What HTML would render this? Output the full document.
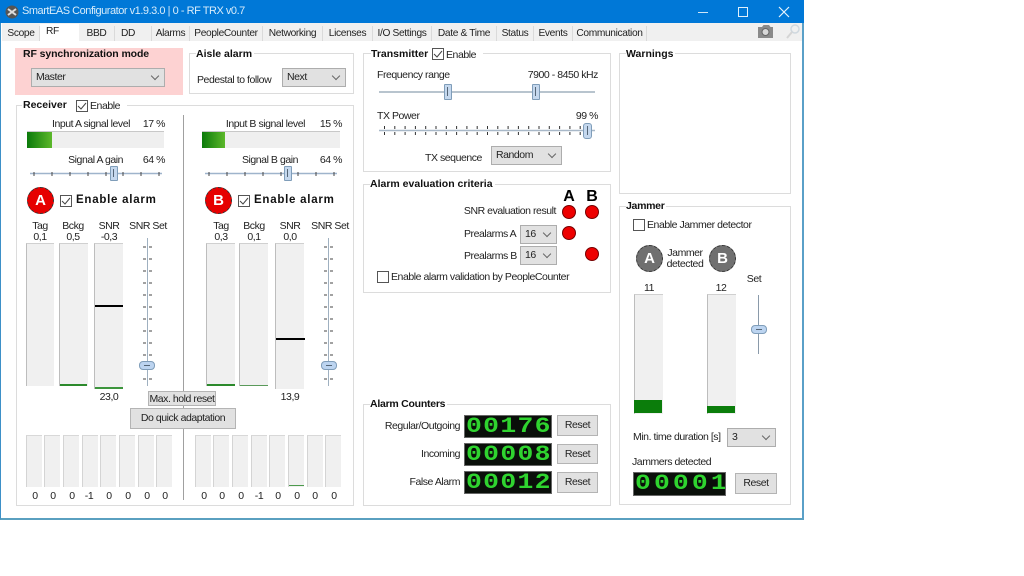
<!DOCTYPE html>
<html><head><meta charset="utf-8"><title>SmartEAS Configurator</title>
<style>
html,body{margin:0;padding:0;background:#fff;width:1024px;height:576px;overflow:hidden}
body{font-family:"Liberation Sans",sans-serif;font-size:10.5px;letter-spacing:-.45px;color:#222;position:relative}
div,span,svg{position:absolute;box-sizing:border-box}
.t{white-space:nowrap;line-height:12px;height:12px}
.c{width:80px;margin-left:-40px;text-align:center}
.r{width:200px;margin-left:-200px;text-align:right}
.b{font-weight:bold;color:#111;background:#fff;padding:0 2px 0 0;letter-spacing:0}
.g{border:1px solid #dcdcdc;background:#fff}
.tab{top:26px;height:15px;background:#f0f0f0;border-right:1px solid #dadada;text-align:center;line-height:15px;font-size:10.2px;letter-spacing:-.35px}
.sel{background:#e1e1e1;border:1px solid #adadad;line-height:16px;padding-left:4px;height:19px}
.sel:after{content:"";position:absolute;right:6px;top:4px;width:5px;height:5px;border-right:1px solid #666;border-bottom:1px solid #666;transform:rotate(45deg)}
.btn{background:#e1e1e1;border:1px solid #b4b4b4;text-align:center;line-height:18px}
.cb{width:12px;height:12px;border:1px solid #555;background:#fff}
.bar{background:#f0f0f0;border-left:1px solid #bdbdbd;border-top:1px solid #d0d0d0}
.m{top:435px;height:52px;border-left-color:#d4d4d4;border-top-color:#d8d8d8}
.v{top:490px}
.led{background:#0a0f0a;border:1px solid #666;overflow:hidden}
.led span{left:1px;top:0;color:#2fd42f;font-family:"Liberation Mono",monospace;font-weight:bold;font-size:22px;line-height:21px;letter-spacing:1.1px;white-space:nowrap;transform:scaleX(1.2);transform-origin:0 0}
.dot{width:14px;height:14px;border-radius:50%;background:#ee0000;border:1px solid #700}
.circ{width:27px;height:27px;border-radius:50%;color:#fff;font-weight:bold;font-size:15px;text-align:center;line-height:25px;border:1px dashed #333;letter-spacing:0}
.hth{width:8px;height:16px;background:#c5d8ee;border:1px solid #7f9db9;border-radius:1px}
.vth{width:16px;height:9px;background:#bcd4f0;border:1px solid #7f9db9;border-radius:4px}
</style></head><body>
<!-- window -->
<div style="left:0;top:0;width:804px;height:520px;background:#fff;border:1px solid #3d90c8;border-right:2px solid #5aa0c8;border-bottom:2px solid #5aa0c0"></div>
<div style="left:0;top:0;width:804px;height:23px;background:#0078d7"></div>
<svg style="left:5px;top:5px" width="14" height="14" viewBox="0 0 14 14"><circle cx="7" cy="7" r="6.5" fill="#555"/><path d="M3 4 L11 10 M11 4 L3 10" stroke="#ddd" stroke-width="2"/></svg>
<div class="t" style="left:22px;top:5px;color:#d8ecfa;font-size:11px;letter-spacing:-.47px">SmartEAS Configurator v1.9.3.0 | 0 - RF TRX v0.7</div>
<svg style="left:695px;top:4px" width="100" height="16" viewBox="0 0 100 16"><path d="M3 8.500H13" stroke="#cfe6f7"/><rect x="43.500" y="3.500" width="9" height="9" fill="none" stroke="#e0f0fb"/><path d="M84 3L94 13M94 3L84 13" stroke="#e8f4fc" stroke-width="1.200"/></svg>
<!-- tabs -->
<div style="left:2px;top:23px;width:800px;height:18px;background:#f0f0f0"></div>
<div class="tab" style="left:3px;width:37px">Scope</div>
<div class="tab" style="left:40px;top:24px;width:39px;height:18px;background:#fff;border:0;line-height:15px;text-align:left;padding-left:6px;">RF</div>
<div class="tab" style="left:79px;width:36px">BBD</div>
<div class="tab" style="left:115px;width:37px;text-align:left;padding-left:6px">DD</div>
<div class="tab" style="left:152px;width:38px">Alarms</div>
<div class="tab" style="left:190px;width:73px">PeopleCounter</div>
<div class="tab" style="left:263px;width:60px">Networking</div>
<div class="tab" style="left:323px;width:50px">Licenses</div>
<div class="tab" style="left:373px;width:59px">I/O Settings</div>
<div class="tab" style="left:432px;width:65px">Date &amp; Time</div>
<div class="tab" style="left:497px;width:37px">Status</div>
<div class="tab" style="left:534px;width:39px">Events</div>
<div class="tab" style="left:573px;width:74px">Communication</div>
<svg style="left:756px;top:23px" width="46" height="17" viewBox="0 0 46 17"><path d="M2 4H6L7.500 2H13L14.500 4H17V15H2Z" fill="#8a8a8a"/><circle cx="9.500" cy="9" r="3.500" fill="#d8d8d8" stroke="#666"/><circle cx="39" cy="6" r="4" fill="none" stroke="#cfd8df" stroke-width="1.500"/><path d="M36 9L31 15" stroke="#d5d5d5" stroke-width="2"/></svg>

<!-- RF sync -->
<div style="left:15px;top:48px;width:168px;height:47px;background:#fdd2d2"></div>
<div class="t" style="left:23px;top:48px;font-weight:bold;color:#111;letter-spacing:-.1px">RF synchronization mode</div>
<div class="sel" style="left:31px;top:68px;width:134px">Master</div>
<!-- Aisle -->
<div class="g" style="left:189px;top:53px;width:165px;height:41px"></div>
<div class="t b" style="left:196px;top:48px">Aisle alarm</div>
<div class="t" style="left:197px;top:74px">Pedestal to follow</div>
<div class="sel" style="left:282px;top:68px;width:64px">Next</div>

<!-- Receiver -->
<div class="g" style="left:16px;top:105px;width:338px;height:401px"></div>
<div class="t b" style="left:22px;top:99px;padding-left:1px;width:105px">Receiver</div>
<div class="cb" style="left:76px;top:100px"></div>
<svg style="left:77px;top:101px" width="10" height="10"><path d="M1 5L4 8L9 2" fill="none" stroke="#444"/></svg>
<div class="t" style="left:90px;top:100px">Enable</div>
<div style="left:183px;top:115px;width:1px;height:385px;background:#a0a0a0"></div>

<div class="t r" style="left:130px;top:118px">Input A signal level</div>
<div class="t r" style="left:165px;top:118px">17 %</div>
<div style="left:27px;top:131px;width:137px;height:17px;background:#efefef;border-top:1px solid #c8c8c8"></div>
<div style="left:27px;top:132px;width:25px;height:16px;background:linear-gradient(90deg,#0b7a0b,#5cb82a)"></div>
<div class="t r" style="left:123px;top:154px">Signal A gain</div>
<div class="t r" style="left:165px;top:154px">64 %</div>
<svg style="left:28px;top:168px" width="136" height="12"><path d="M2 5.500H134" stroke="#9fb4cc" stroke-width="1.500"/><path d="M6 4V8M24 4V8M42 4V8M60 4V8M78 4V8M95 4V8M113 4V8M131 4V8" stroke="#444"/></svg>
<div class="hth" style="left:110px;top:166px;height:15px"></div><div style="left:113px;top:169px;width:1px;height:8px;background:#567"></div>

<div class="t r" style="left:305px;top:118px">Input B signal level</div>
<div class="t r" style="left:342px;top:118px">15 %</div>
<div style="left:202px;top:131px;width:138px;height:17px;background:#efefef;border-top:1px solid #c8c8c8"></div>
<div style="left:202px;top:132px;width:23px;height:16px;background:linear-gradient(90deg,#0b7a0b,#5cb82a)"></div>
<div class="t r" style="left:298px;top:154px">Signal B gain</div>
<div class="t r" style="left:342px;top:154px">64 %</div>
<svg style="left:203px;top:168px" width="136" height="12"><path d="M2 5.500H134" stroke="#9fb4cc" stroke-width="1.500"/><path d="M6 4V8M24 4V8M42 4V8M60 4V8M78 4V8M95 4V8M113 4V8M131 4V8" stroke="#444"/></svg>
<div class="hth" style="left:284px;top:166px;height:15px"></div><div style="left:287px;top:169px;width:1px;height:8px;background:#567"></div>

<div class="circ" style="left:27px;top:187px;background:#e60000">A</div>
<div class="cb" style="left:60px;top:195px"></div>
<svg style="left:61px;top:196px" width="10" height="10"><path d="M1 5L4 8L9 2" fill="none" stroke="#444"/></svg>
<div class="t" style="left:76px;top:194px;font-weight:bold;font-size:11.5px;letter-spacing:.75px;color:#111">Enable alarm</div>
<div class="circ" style="left:205px;top:187px;background:#e60000">B</div>
<div class="cb" style="left:238px;top:195px"></div>
<svg style="left:239px;top:196px" width="10" height="10"><path d="M1 5L4 8L9 2" fill="none" stroke="#444"/></svg>
<div class="t" style="left:254px;top:194px;font-weight:bold;font-size:11.5px;letter-spacing:.75px;color:#111">Enable alarm</div>

<div class="t c" style="left:40px;top:220px">Tag</div><div class="t c" style="left:40px;top:231px">0,1</div>
<div class="t c" style="left:73px;top:220px">Bckg</div><div class="t c" style="left:73px;top:231px">0,5</div>
<div class="t c" style="left:109px;top:220px">SNR</div><div class="t c" style="left:109px;top:231px">-0,3</div>
<div class="t c" style="left:148px;top:220px">SNR Set</div>
<div class="t c" style="left:221px;top:220px">Tag</div><div class="t c" style="left:221px;top:231px">0,3</div>
<div class="t c" style="left:254px;top:220px">Bckg</div><div class="t c" style="left:254px;top:231px">0,1</div>
<div class="t c" style="left:290px;top:220px">SNR</div><div class="t c" style="left:290px;top:231px">0,0</div>
<div class="t c" style="left:330px;top:220px">SNR Set</div>

<div class="bar" style="left:26px;top:243px;width:28px;height:143px"></div>
<div class="bar" style="left:59px;top:243px;width:29px;height:143px"></div>
<div style="left:60px;top:384px;width:27px;height:2px;background:#2c8a2c"></div>
<div class="bar" style="left:94px;top:243px;width:29px;height:146px"></div>
<div style="left:95px;top:387px;width:28px;height:2px;background:#3d953d"></div>
<div style="left:95px;top:305px;width:28px;height:2px;background:#000"></div>
<div class="bar" style="left:206px;top:243px;width:29px;height:143px"></div>
<div style="left:207px;top:384px;width:28px;height:2px;background:#2c8a2c"></div>
<div class="bar" style="left:239px;top:243px;width:29px;height:143px"></div>
<div style="left:240px;top:385px;width:28px;height:1px;background:#5a9a5a"></div>
<div class="bar" style="left:275px;top:243px;width:29px;height:146px"></div>
<div style="left:276px;top:338px;width:29px;height:2px;background:#000"></div>

<svg style="left:138px;top:238px" width="20" height="150"><path d="M9.500 0V148" stroke="#9fb0c0"/><path d="M5 9H8M11 9H14M5 21H8M11 21H14M5 33H8M11 33H14M5 45H8M11 45H14M5 57H8M11 57H14M5 69H8M11 69H14M5 81H8M11 81H14M5 93H8M11 93H14M5 105H8M11 105H14M5 117H8M11 117H14M5 129H8M11 129H14M5 141H8M11 141H14" stroke="#444"/></svg>
<div class="vth" style="left:139px;top:361px"></div><div style="left:144px;top:365px;width:6px;height:1px;background:#567"></div>
<svg style="left:319px;top:238px" width="20" height="150"><path d="M9.500 0V148" stroke="#9fb0c0"/><path d="M5 9H8M11 9H14M5 21H8M11 21H14M5 33H8M11 33H14M5 45H8M11 45H14M5 57H8M11 57H14M5 69H8M11 69H14M5 81H8M11 81H14M5 93H8M11 93H14M5 105H8M11 105H14M5 117H8M11 117H14M5 129H8M11 129H14M5 141H8M11 141H14" stroke="#444"/></svg>
<div class="vth" style="left:321px;top:361px"></div><div style="left:326px;top:365px;width:6px;height:1px;background:#567"></div>

<div class="t c" style="left:109px;top:391px">23,0</div>
<div class="t c" style="left:290px;top:391px">13,9</div>
<div class="btn" style="left:148px;top:391px;width:68px;height:15px;line-height:14px;white-space:nowrap">Max. hold reset</div>
<div class="btn" style="left:130px;top:408px;width:106px;height:21px">Do quick adaptation</div>

<div class="bar m" style="left:26px;width:16px"></div><div class="bar m" style="left:44px;width:16px"></div><div class="bar m" style="left:63px;width:16px"></div><div class="bar m" style="left:82px;width:16px"></div><div class="bar m" style="left:100px;width:16px"></div><div class="bar m" style="left:119px;width:16px"></div><div class="bar m" style="left:138px;width:16px"></div><div class="bar m" style="left:156px;width:16px"></div>
<div class="bar m" style="left:195px;width:16px"></div><div class="bar m" style="left:213px;width:16px"></div><div class="bar m" style="left:232px;width:16px"></div><div class="bar m" style="left:251px;width:16px"></div><div class="bar m" style="left:269px;width:16px"></div><div class="bar m" style="left:288px;width:16px"></div><div class="bar m" style="left:307px;width:16px"></div><div class="bar m" style="left:325px;width:16px"></div>
<div style="left:289px;top:485px;width:15px;height:1px;background:#4c9a4c"></div>
<div class="t c v" style="left:35px">0</div><div class="t c v" style="left:53px">0</div><div class="t c v" style="left:72px">0</div><div class="t c v" style="left:89px">-1</div><div class="t c v" style="left:109px">0</div><div class="t c v" style="left:128px">0</div><div class="t c v" style="left:147px">0</div><div class="t c v" style="left:165px">0</div>
<div class="t c v" style="left:204px">0</div><div class="t c v" style="left:222px">0</div><div class="t c v" style="left:241px">0</div><div class="t c v" style="left:259px">-1</div><div class="t c v" style="left:278px">0</div><div class="t c v" style="left:297px">0</div><div class="t c v" style="left:315px">0</div><div class="t c v" style="left:334px">0</div>

<!-- Transmitter -->
<div class="g" style="left:363px;top:53px;width:248px;height:119px"></div>
<div class="t b" style="left:371px;top:48px;width:112px">Transmitter</div>
<div class="cb" style="left:432px;top:48px"></div>
<svg style="left:433px;top:49px" width="10" height="10"><path d="M1 5L4 8L9 2" fill="none" stroke="#444"/></svg>
<div class="t" style="left:446px;top:49px">Enable</div>
<div class="t" style="left:377px;top:69px">Frequency range</div>
<div class="t r" style="left:598px;top:69px">7900 - 8450 kHz</div>
<div style="left:379px;top:91px;width:216px;height:2px;background:#b8c4ce"></div>
<div class="hth" style="left:444px;top:84px"></div><div style="left:447px;top:87px;width:1px;height:9px;background:#567"></div>
<div class="hth" style="left:532px;top:84px"></div><div style="left:535px;top:87px;width:1px;height:9px;background:#567"></div>
<div class="t" style="left:377px;top:110px">TX Power</div>
<div class="t r" style="left:598px;top:110px">99 %</div>
<svg style="left:378px;top:124px" width="220" height="14"><path d="M1 6.500H217" stroke="#a8b8c8" stroke-width="1.500"/><path d="M6.500 2V5M6.500 8V11M16.800 2V5M16.800 8V11M27.100 2V5M27.100 8V11M37.400 2V5M37.400 8V11M47.700 2V5M47.700 8V11M58 2V5M58 8V11M68.300 2V5M68.300 8V11M78.600 2V5M78.600 8V11M88.900 2V5M88.900 8V11M99.200 2V5M99.200 8V11M109.500 2V5M109.500 8V11M119.800 2V5M119.800 8V11M130.100 2V5M130.100 8V11M140.400 2V5M140.400 8V11M150.700 2V5M150.700 8V11M161 2V5M161 8V11M171.300 2V5M171.300 8V11M181.600 2V5M181.600 8V11M191.900 2V5M191.900 8V11M202.200 2V5M202.200 8V11" stroke="#333"/></svg>
<div class="hth" style="left:583px;top:123px;width:9px;height:16px;border-radius:3px"></div><div style="left:587px;top:126px;width:1px;height:9px;background:#567"></div>
<div class="t" style="left:425px;top:152px">TX sequence</div>
<div class="sel" style="left:491px;top:146px;width:71px">Random</div>

<!-- Alarm evaluation -->
<div class="g" style="left:363px;top:184px;width:248px;height:109px"></div>
<div class="t b" style="left:370px;top:178px">Alarm evaluation criteria</div>
<div class="t c" style="left:569px;top:191px;font-weight:bold;font-size:16px;color:#000;letter-spacing:0">A</div>
<div class="t c" style="left:592px;top:191px;font-weight:bold;font-size:16px;color:#000;letter-spacing:0">B</div>
<div class="t r" style="left:556px;top:205px">SNR evaluation result</div>
<div class="dot" style="left:562px;top:205px"></div><div class="dot" style="left:585px;top:205px"></div>
<div class="t" style="left:464px;top:228px">Prealarms A</div>
<div class="sel" style="left:520px;top:225px;width:37px">16</div>
<div class="dot" style="left:562px;top:226px"></div>
<div class="t" style="left:464px;top:250px">Prealarms B</div>
<div class="sel" style="left:520px;top:246px;width:37px">16</div>
<div class="dot" style="left:585px;top:247px"></div>
<div class="cb" style="left:377px;top:271px"></div>
<div class="t" style="left:391px;top:271px">Enable alarm validation by PeopleCounter</div>

<!-- Alarm Counters -->
<div class="g" style="left:363px;top:404px;width:248px;height:102px"></div>
<div class="t b" style="left:370px;top:398px;letter-spacing:-.25px">Alarm Counters</div>
<div class="t r" style="left:460px;top:420px">Regular/Outgoing</div>
<div class="led" style="left:464px;top:415px;width:88px;height:23px"><span>00176</span></div>
<div class="btn" style="left:557px;top:415px;width:41px;height:21px">Reset</div>
<div class="t r" style="left:460px;top:448px">Incoming</div>
<div class="led" style="left:464px;top:443px;width:88px;height:23px"><span>00008</span></div>
<div class="btn" style="left:557px;top:444px;width:41px;height:20px">Reset</div>
<div class="t r" style="left:460px;top:476px">False Alarm</div>
<div class="led" style="left:464px;top:471px;width:88px;height:23px"><span>00012</span></div>
<div class="btn" style="left:557px;top:472px;width:41px;height:21px">Reset</div>

<!-- Warnings -->
<div class="g" style="left:619px;top:53px;width:172px;height:141px"></div>
<div class="t b" style="left:626px;top:48px">Warnings</div>

<!-- Jammer -->
<div class="g" style="left:619px;top:206px;width:172px;height:299px"></div>
<div class="t b" style="left:626px;top:200px;letter-spacing:-.3px">Jammer</div>
<div class="cb" style="left:633px;top:219px"></div>
<div class="t" style="left:647px;top:219px">Enable Jammer detector</div>
<div class="circ" style="left:636px;top:245px;background:#707070">A</div>
<div class="circ" style="left:709px;top:245px;background:#707070">B</div>
<div class="t c" style="left:685px;top:247px">Jammer</div>
<div class="t c" style="left:685px;top:258px">detected</div>
<div class="t c" style="left:754px;top:273px">Set</div>
<div class="t c" style="left:649px;top:282px">11</div>
<div class="t c" style="left:721px;top:282px">12</div>
<div class="bar" style="left:634px;top:294px;width:29px;height:120px"></div>
<div style="left:634px;top:400px;width:28px;height:13px;background:#0b7d0b"></div>
<div class="bar" style="left:707px;top:294px;width:29px;height:120px"></div>
<div style="left:707px;top:406px;width:28px;height:7px;background:#0b7d0b"></div>
<div style="left:758px;top:295px;width:1px;height:59px;background:#8a9aaa"></div>
<div class="vth" style="left:751px;top:325px"></div><div style="left:756px;top:329px;width:6px;height:1px;background:#567"></div>
<div class="t" style="left:633px;top:431px">Min. time duration [s]</div>
<div class="sel" style="left:727px;top:428px;width:49px">3</div>
<div class="t" style="left:632px;top:456px">Jammers detected</div>
<div class="led" style="left:633px;top:472px;width:93px;height:24px"><span style="letter-spacing:2.6px">00001</span></div>
<div class="btn" style="left:735px;top:473px;width:42px;height:21px">Reset</div>
</body></html>
